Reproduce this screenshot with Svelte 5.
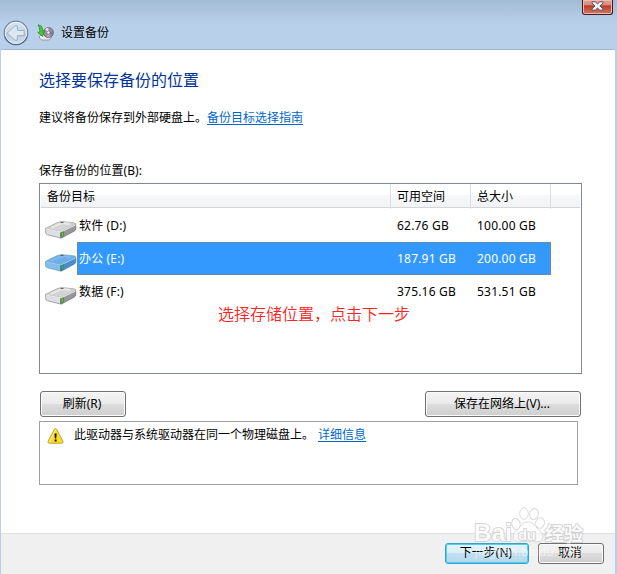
<script>
	let selected = $state('E')

	const drives = [
		{ id: 'D', name: '软件 (D:)', free: '62.76 GB', size: '100.00 GB' },
		{ id: 'E', name: '办公 (E:)', free: '187.91 GB', size: '200.00 GB' },
		{ id: 'F', name: '数据 (F:)', free: '375.16 GB', size: '531.51 GB' }
	]
</script>

{#snippet driveIcon(active)}
	<svg class="drive" class:active width="32" height="18" viewBox="0 0 32 18">
		<path class="side" d="M.6 7.6 15.6 10.4v6.6L2.5 13.8Q.7 13.2.6 11.6Z" />
		<path class="edge" d="M15.6 10.4 30.8 3.5v4.2q0 1.5-1.3 2.2L16.4 17.1H15.6Z" />
		<path class="top" d="M.8 7.2 12.3 1.6Q15.5.4 18.5.7l11 1.2q2 .6.8 1.7L17.2 10.2q-1 .5-2.2.3L1.5 8Q.4 7.7.8 7.2Z" />
		<path class="shine" d="M6 6.9 15 2.8q2-.8 4-.5l6 .8" />
		<path class="rim" d="m1 8 14.3 2.8q1 .1 2-.5L30.5 4" />
		<path class="hole" d="M15.5 1.4h3" />
		<path class="led" d="M16.4 11.8 18.6 10.8v4l-2.2 1.2Z" />
	</svg>
{/snippet}

<div class="window">
	<header>
		<svg class="back" width="26" height="26" viewBox="0 0 26 26">
			<defs>
				<linearGradient id="ball" x2="0" y2="1">
					<stop offset="0" stop-color="#dce7f1" />
					<stop offset=".48" stop-color="#c5d6e6" />
					<stop offset=".52" stop-color="#b2c8df" />
					<stop offset="1" stop-color="#d5e4f4" />
				</linearGradient>
			</defs>
			<circle cx="13" cy="13" r="11.8" fill="url(#ball)" stroke="#70869f" stroke-width="1.3" />
			<path d="M1.9 16.5A11.8 11.8 0 0 0 24.1 16.5" fill="none" stroke="#4e6480" stroke-width="1.2" />
			<circle cx="13" cy="13" r="10.7" fill="none" stroke="#e9f1f8" stroke-width=".9" />
			<path d="m4.2 13 7.6-7.1h2.6v4.5h6.8v5.2h-6.8v4.6h-2.6Z" fill="#dce7f1" stroke="#9bb0c7" />
		</svg>
		<svg class="app-icon" width="17" height="17" viewBox="0 0 17 17">
			<path d="m2.5 12.2 2-1.7h7l3 2.7-2 2.8H4.4L2.5 14Z" fill="#e6e9ea" stroke="#858d90" stroke-width=".8" />
			<circle cx="11.4" cy="8.6" r="5" fill="#9393a3" stroke="#676772" stroke-width=".9" />
			<path d="M11.4 8.6 8 5.2q1.5-1.4 3.4-1.4Z" fill="#e6d9e8" />
			<path d="m11.4 8.6 4.5-1q.4 2-.7 3.4Z" fill="#7d70b5" />
			<path d="m11.4 8.6 2 4.3q-2 .8-4-.2Z" fill="#cb9ca0" />
			<circle cx="11.4" cy="8.6" r="1.6" fill="#e7eef5" stroke="#73737d" stroke-width=".6" />
			<path d="M1 .8 4.3 2q1.6 2 1.4 5l1.9-.6-2 6-4.8-3.9L2.9 8Q3 4 1 .8Z" fill="#45c934" stroke="#208727" stroke-width=".7" />
		</svg>
		<span>设置备份</span>
		<button class="close" aria-label="关闭">
			<svg width="13" height="10" viewBox="0 0 13 10">
				<path d="M1 .8h3.2l2.3 2.1L8.8.8H12v1.4L8.9 5l3.1 2.8v1.4H8.8L6.5 7.1 4.2 9.2H1V7.8L4.1 5 1 2.2Z" fill="#f4f7fa" stroke="#585568" />
			</svg>
		</button>
	</header>

	<main>
		<h1>选择要保存备份的位置</h1>
		<p class="advice">建议将备份保存到外部硬盘上。<a href="#guide">备份目标选择指南</a></p>
		<p class="label">保存备份的位置(B):</p>

		<div class="list">
			<div class="columns">
				<span>备份目标</span>
				<span>可用空间</span>
				<span>总大小</span>
			</div>
			{#each drives as drive (drive.id)}
				<div
					class="row"
					role="option"
					tabindex="-1"
					aria-selected={selected === drive.id}
					onclick={() => (selected = drive.id)}
					onkeydown={(e) => e.key === 'Enter' && (selected = drive.id)}
				>
					{@render driveIcon(selected === drive.id)}
					<div class="cells" class:selected={selected === drive.id}>
						<span class="name">{drive.name}</span>
						<span class="amount">{drive.free}</span>
						<span class="amount">{drive.size}</span>
					</div>
				</div>
			{/each}
			<p class="note">选择存储位置，点击下一步</p>
		</div>

		<div class="actions">
			<button class="refresh">刷新(R)</button>
			<button class="network">保存在网络上(V)...</button>
		</div>

		<div class="warning">
			<svg width="17" height="16" viewBox="0 0 17 16">
				<path d="M7.4 1.3q1.1-1.4 2.2 0l6.3 12q.5 1.6-1.1 1.9H2.2Q.6 14.9 1.1 13.3Z" fill="#fbdc2d" stroke="#c7a321" />
				<path d="M8.5 2.3 2.3 14.1" stroke="#fff2a2" fill="none" />
				<path d="M7.4 5.4h2.3l-.5 5H7.9ZM7.6 11.5h2v1.9h-2Z" fill="#181300" />
			</svg>
			<span>此驱动器与系统驱动器在同一个物理磁盘上。</span>
			<a href="#details">详细信息</a>
		</div>
	</main>

	<footer>
		<button class="next">下一步(N)</button>
		<button class="cancel">取消</button>
	</footer>

	<svg class="watermark" width="116" height="58" viewBox="0 0 116 58">
		<g class="paw">
			<ellipse cx="42" cy="23" rx="4.2" ry="5.6" transform="rotate(-12 42 23)" />
			<ellipse cx="50" cy="12.5" rx="4.3" ry="5.7" />
			<ellipse cx="60" cy="13" rx="4.2" ry="5.6" transform="rotate(12 60 13)" />
			<ellipse cx="66" cy="22" rx="4.4" ry="5.4" transform="rotate(12 66 22)" />
			<path d="M54 21c6 0 8 6 12 9 5 5 3 11-3 11-4 0-7-.6-10-.6s-5 .6-8 .6c-7 0-7-7-3-11 5-4 6-9 12-9Z" />
		</g>
		<text class="brand" x="0" y="40" textLength="38">Bai</text>
		<text class="du" x="44" y="39" textLength="18">du</text>
		<text class="brand cn" x="71" y="40" textLength="38">经验</text>
		<text class="url" x="1" y="55" textLength="107">jingyan.baidu.com</text>
	</svg>
</div>

<style>
	:global(body) {
		margin: 0;
	}

	.window {
		position: relative;
		display: flex;
		flex-direction: column;
		box-sizing: border-box;
		width: 617px;
		height: 574px;
		padding: 0 2px 0 1px;
		background: linear-gradient(#a2bcd6 0, #b9d0ea 24px);
		color: #000;
		font: 12px/16px 'Noto Sans', 'Noto Sans CJK SC', sans-serif;
		overflow: hidden;
	}

	header {
		display: flex;
		align-items: center;
		box-sizing: border-box;
		height: 50px;
		padding: 16px 0 0 2px;
		border-bottom: 1px solid #9db8d2;
	}

	.app-icon {
		margin: 0 7px 0 8px;
	}

	button {
		box-sizing: border-box;
		padding: 0 2px 1px 0;
		border: 1px solid #707070;
		border-radius: 3px;
		background: linear-gradient(#f3f3f3, #ebebeb 49%, #dddddd 50%, #cfcfcf);
		box-shadow: inset 0 0 0 1px #fbfbfb;
		color: #000;
		font: inherit;
		white-space: nowrap;
	}

	button.close {
		display: flex;
		align-items: center;
		justify-content: center;
		align-self: flex-start;
		width: 31px;
		height: 15px;
		margin: -16px 2px 0 auto;
		padding: 0 0 2px;
		border-color: #4b1525;
		border-top: 0;
		border-radius: 0 0 3px 3px;
		background: linear-gradient(#e4a398, #d98778 38%, #b83b23 40%, #d27b64);
		box-shadow: inset 0 0 0 1px #efb9ae;
	}

	main {
		flex: 1;
		padding: 0 34px 0 38px;
		background: #fff;
	}

	h1 {
		margin: 18px 0 0;
		color: #003399;
		font-size: 16px;
		font-weight: 400;
		line-height: 24px;
	}

	p {
		margin: 0;
	}

	.advice {
		margin-top: 18px;
	}

	.label {
		margin-top: 37px;
		letter-spacing: 0.08px;
	}

	a {
		color: #0066cc;
		text-decoration: underline;
		text-underline-offset: 2px;
	}

	.list {
		box-sizing: border-box;
		width: 543px;
		height: 191px;
		margin-top: 4px;
		padding: 0 1px;
		border: 1px solid #828790;
	}

	.columns {
		display: grid;
		grid-template-columns: 350px 80px 80px;
		box-sizing: border-box;
		height: 24px;
		margin-bottom: 1px;
		border-bottom: 1px solid #d5d5d5;
		background: linear-gradient(#fff 45%, #f7f8fa 50%, #f1f2f4);
		line-height: 25px;
	}

	.columns span {
		padding-left: 6px;
		border-right: 1px solid #dedfe1;
	}

	.row {
		display: flex;
		align-items: center;
		height: 33px;
		padding-left: 4px;
	}

	.drive {
		flex: none;
		margin-top: 8px;
	}

	.cells {
		display: grid;
		grid-template-columns: 314px 80px 80px;
		box-sizing: border-box;
		width: 474px;
		height: 33px;
		border: 1px solid transparent;
		line-height: 31px;
	}

	.cells .name {
		padding-left: 1px;
		letter-spacing: 0.15px;
	}

	.cells .amount {
		padding-left: 5px;
		letter-spacing: 0.2px;
	}

	.cells.selected {
		border: 1px dotted #997f60;
		background: #3399ff;
		color: #fff;
	}

	.side {
		fill: #dedee5;
		stroke: #85858c;
		stroke-width: 0.7;
	}

	.edge {
		fill: #96969b;
		stroke: #707074;
		stroke-width: 0.7;
	}

	.top {
		fill: #d3d3d3;
		stroke: #999;
		stroke-width: 0.7;
	}

	.shine {
		fill: none;
		stroke: #e8e8e8;
		stroke-width: 2;
	}

	.rim {
		fill: none;
		stroke: #f7f7fa;
		stroke-width: 0.9;
	}

	.hole {
		stroke: #555;
		stroke-width: 1;
	}

	.led {
		fill: #58d51c;
		stroke: #34733a;
		stroke-width: 0.6;
	}

	.active .side {
		fill: #84bcf0;
		stroke: #5793a8;
	}

	.active .edge {
		fill: #4c8ec9;
		stroke: #3973a3;
	}

	.active .top {
		fill: #6eaee8;
		stroke: #609fb8;
	}

	.active .shine {
		stroke: #80b9ed;
	}

	.active .rim {
		stroke: #a5d3fb;
	}

	.active .led {
		fill: #32b874;
	}

	.note {
		padding-left: 177px;
		color: #ff2222;
		font-size: 16px;
		font-weight: 350;
		line-height: 12px;
	}

	.actions {
		display: flex;
		justify-content: space-between;
		width: 541px;
		margin: 17px 0 4px 1px;
	}

	.actions button {
		height: 26px;
	}

	.refresh {
		width: 86px;
	}

	.network {
		width: 156px;
	}

	.warning {
		display: flex;
		align-items: flex-start;
		box-sizing: border-box;
		width: 539px;
		height: 64px;
		padding: 5px 8px;
		border: 1px solid #a0a0a0;
	}

	.warning svg {
		margin: 1px 10px 0 -1px;
	}

	.warning a {
		margin-left: 4px;
	}

	footer {
		display: flex;
		justify-content: flex-end;
		gap: 9px;
		box-sizing: border-box;
		height: 41px;
		padding: 9px 11px 0 0;
		border-top: 1px solid #dfdfdf;
		background: #f0f0f0;
	}

	footer button {
		width: 66px;
		height: 21px;
		line-height: 18px;
	}

	footer .next {
		width: 84px;
		border-color: #3c9fc9;
		background: linear-gradient(#e8f4fa, #d9edf7 49%, #bfe1f1 50%, #b4d9eb);
		box-shadow: inset 0 0 0 1px #48d3f6;
	}

	/* sits over the footer and the bottom of the page */
	.watermark {
		position: absolute;
		left: 474px;
		top: 501px;
		pointer-events: none;
	}

	.paw {
		fill: #fff;
		fill-opacity: 0.6;
		stroke: #dadada;
		stroke-width: 1;
	}

	.watermark text {
		fill: #fff;
		fill-opacity: 0.9;
		stroke: #cfcfcf;
		stroke-width: 1.6;
		paint-order: stroke;
		font-family: 'Liberation Sans', 'Noto Sans CJK SC', sans-serif;
		font-weight: 700;
	}

	.watermark .brand {
		font-size: 24px;
	}

	.watermark .cn {
		font-size: 19px;
	}

	.watermark .du {
		font-size: 15px;
	}

	.watermark .url {
		fill-opacity: 0.55;
		stroke: none;
		font-size: 12px;
		font-weight: 400;
	}
</style>
